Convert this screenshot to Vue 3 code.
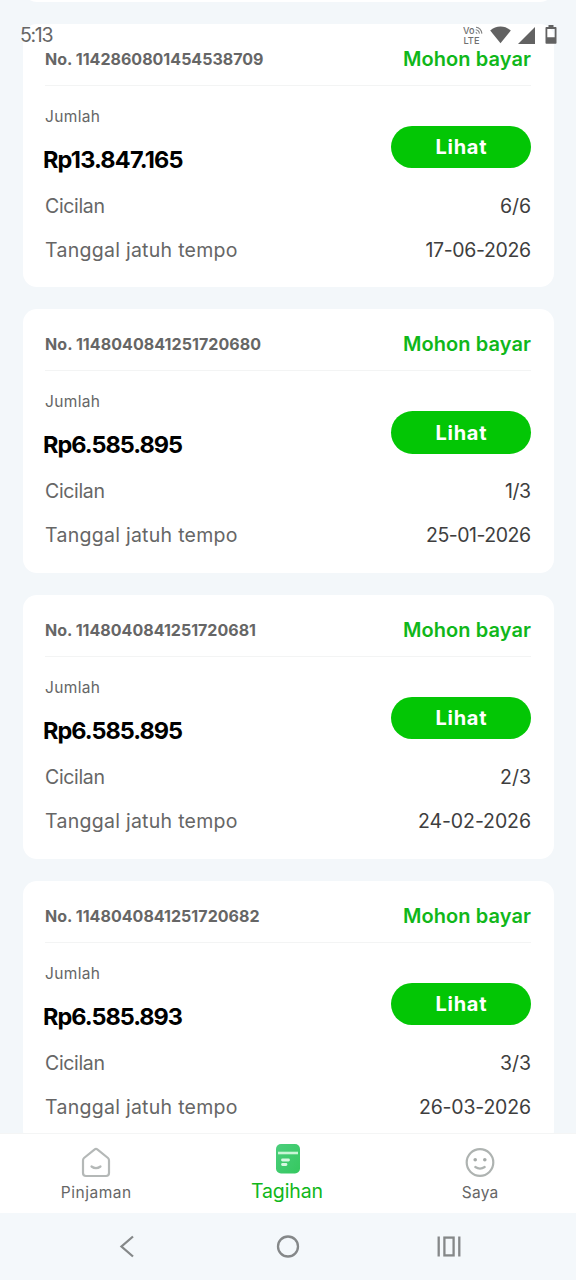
<script setup>
const bills = [
  { no: '1142860801454538709', noWidth: 218.5, amount: 'Rp13.847.165', amountWidth: 140.5, part: '6/6', partWidth: 31, due: '17-06-2026', dueWidth: 105.5 },
  { no: '1148040841251720680', noWidth: 216, amount: 'Rp6.585.895', amountWidth: 140, part: '1/3', partWidth: 26, due: '25-01-2026', dueWidth: 105 },
  { no: '1148040841251720681', noWidth: 211, amount: 'Rp6.585.895', amountWidth: 140, part: '2/3', partWidth: 31, due: '24-02-2026', dueWidth: 113 },
  { no: '1148040841251720682', noWidth: 214.5, amount: 'Rp6.585.893', amountWidth: 140, part: '3/3', partWidth: 31, due: '26-03-2026', dueWidth: 112 },
]

// Tracks a label so that it fills the given width.
const vFit = {
  mounted(el, { value }) {
    const n = el.textContent.length
    const delta = (value - el.getBoundingClientRect().width) / (n - 1)
    el.style.letterSpacing = `${delta}px`
    el.style.marginRight = `${-delta}px`
  },
}
</script>

<template>
  <div class="screen">
    <header class="status">
      <span v-fit="33.5" class="clock">5:13</span>
      <div class="status-icons">
        <svg class="volte" width="21" height="20" viewBox="0 0 21 20">
          <text x="0" y="9" textLength="11.5" lengthAdjust="spacingAndGlyphs">Vo</text>
          <text x="0.5" y="18.5" textLength="16" lengthAdjust="spacingAndGlyphs">LTE</text>
          <g fill="none" stroke="#808080" stroke-width="1.1">
            <path d="M13 2.2C16 2.4 18.7 5 18.9 8.6M12.7 4.8C14.8 5 16.2 6.5 16.4 8.6" />
            <path d="M12.8 7.3L14.2 8.7" />
          </g>
        </svg>
        <svg class="wifi" width="21" height="18" viewBox="0 0 21 18">
          <path d="M.2 4.6C6-1 15-1 20.8 4.6L10.5 17.2Z" fill="#626262" />
        </svg>
        <svg class="signal" width="17" height="17" viewBox="0 0 17 17">
          <path d="M17 0V17H0Z" fill="#626262" />
        </svg>
        <svg class="battery" width="12" height="19" viewBox="0 0 12 19">
          <path d="M3.5 0H8.5V2H10.8Q11.5 2 11.5 3V18Q11.5 18.8 10.7 18.8H1.3Q.5 18.8 .5 18V3Q.5 2 1.3 2H3.5ZM2.3 4V12.3H9.7V4Z" fill="#626262" fill-rule="evenodd" />
        </svg>
      </div>
    </header>

    <main class="list">
      <div class="card tail"></div>
      <article v-for="b in bills" :key="b.no" class="card">
        <div class="head">
          <span v-fit="b.noWidth" class="no">No. {{ b.no }}</span>
          <span v-fit="128" class="state">Mohon bayar</span>
        </div>
        <div class="sum">
          <div class="sum-text">
            <span v-fit="55" class="caption">Jumlah</span>
            <span v-fit="b.amountWidth" class="amount">{{ b.amount }}</span>
          </div>
          <button class="view"><span v-fit="51">Lihat</span></button>
        </div>
        <div class="row">
          <span v-fit="60">Cicilan</span>
          <span v-fit="b.partWidth" class="value">{{ b.part }}</span>
        </div>
        <div class="row">
          <span v-fit="192.5">Tanggal jatuh tempo</span>
          <span v-fit="b.dueWidth" class="value">{{ b.due }}</span>
        </div>
      </article>
    </main>

    <nav class="tabs">
      <div class="tab">
        <svg width="32" height="32" viewBox="0 0 32 32" fill="none" stroke="#b4b8b7" stroke-width="2.2" stroke-linecap="round" stroke-linejoin="round">
          <path d="M14.7 2.4Q16 1.3 17.3 2.4L28 11Q29 11.800 29 13.500V26Q29 29 26 29H6Q3 29 3 26V13.500Q3 11.800 4 11Z" />
          <path d="M11.500 19.500Q16 22.800 20.500 19.500" />
        </svg>
        <span v-fit="70.5">Pinjaman</span>
      </div>
      <div class="tab active">
        <svg width="32" height="32" viewBox="0 0 32 32">
          <defs>
            <linearGradient id="bill" x1="0" y1="0" x2="1" y2="1">
              <stop offset="0" stop-color="#4bce7c" />
              <stop offset="1" stop-color="#35c85f" />
            </linearGradient>
          </defs>
          <rect x="4" y="1" width="24" height="29.5" rx="5" fill="url(#bill)" />
          <path d="M6 10H26" stroke="#c9f5d6" stroke-width="2.6" />
          <path d="M10.500 17H16.500M10.500 21.500H14" stroke="#d8f8e1" stroke-width="2.8" stroke-linecap="round" />
        </svg>
        <span v-fit="72">Tagihan</span>
      </div>
      <div class="tab">
        <svg width="32" height="32" viewBox="0 0 32 32" fill="none" stroke="#aeb3b1" stroke-width="2.2" stroke-linecap="round">
          <circle cx="16" cy="15.5" r="13.3" />
          <path d="M11.300 20Q16 23.200 20.700 20" />
          <g fill="#a5aaa8" stroke="none">
            <circle cx="11.200" cy="12.800" r="1.8" />
            <circle cx="20.800" cy="12.800" r="1.8" />
          </g>
        </svg>
        <span v-fit="36.5">Saya</span>
      </div>
    </nav>

    <footer class="system">
      <svg width="24" height="24" viewBox="0 0 24 24" fill="none" stroke="#858889" stroke-width="2.3">
        <path d="M18 2.500L6.500 12.500L18 22.500" />
      </svg>
      <svg width="24" height="24" viewBox="0 0 24 24" fill="none" stroke="#858889" stroke-width="2.3">
        <circle cx="12" cy="12.500" r="10" />
      </svg>
      <svg width="24" height="24" viewBox="0 0 24 24" fill="none" stroke="#858889" stroke-width="2.3">
        <path d="M1.700 2.500V22.500M22.300 2.500V22.500" />
        <rect x="7.4" y="3.6" width="9.2" height="17.8" />
      </svg>
    </footer>
  </div>
</template>

<style>
html,
body {
  margin: 0;
  background: #f3f7fa;
}
</style>

<style scoped>
.screen {
  position: relative;
  display: flex;
  flex-direction: column;
  width: 576px;
  height: 1280px;
  overflow: hidden;
  background: #f3f7fa;
  font-family: Inter, "Noto Sans", sans-serif;
  color: #666;
}
.status {
  position: absolute;
  z-index: 2;
  top: 23px;
  left: 20px;
  right: 19px;
  display: flex;
  align-items: center;
  justify-content: space-between;
  height: 24px;
}
.clock {
  font-size: 19.5px;
  line-height: 24px;
}
.status-icons {
  display: flex;
  align-items: center;
}
.volte text {
  font: 500 9.5px Inter, sans-serif;
  fill: #707070;
}
.wifi {
  margin-left: 6px;
}
.signal {
  margin-left: 7.5px;
}
.battery {
  margin-left: 10px;
  margin-top: -1px;
}
.list {
  height: 1133px;
  flex: none;
  padding: 0 22.5px;
  overflow: hidden;
  box-sizing: border-box;
}
.card {
  box-sizing: border-box;
  height: 263.7px;
  margin-bottom: 22px;
  padding: 0 22.5px;
  border-radius: 14px;
  background: #fff;
}
.tail {
  height: 40px;
  margin-top: -38.4px;
}
.head {
  display: flex;
  align-items: center;
  justify-content: space-between;
  height: 62px;
  padding-top: 9px;
  box-sizing: border-box;
  border-bottom: 1px solid #f3f4f4;
  white-space: nowrap;
}
.no {
  font-size: 16px;
  font-weight: 700;
}
.state {
  font-size: 20px;
  font-weight: 600;
  color: #10b71a;
}
.sum {
  display: flex;
  align-items: flex-start;
  justify-content: space-between;
  height: 105px;
  padding-top: 19px;
  box-sizing: border-box;
}
.sum-text {
  display: flex;
  flex-direction: column;
  align-items: flex-start;
  gap: 15px;
}
.caption {
  font-size: 15.5px;
  line-height: 24px;
}
.amount {
  margin-left: -2px;
  font-size: 23.5px;
  font-weight: 700;
  line-height: 32px;
  color: #000;
}
.view {
  display: flex;
  align-items: center;
  justify-content: center;
  width: 140px;
  height: 42.5px;
  margin-top: 21px;
  padding: 0;
  border: 0;
  border-radius: 22px;
  background: #03c605;
  color: #fff;
  font: 700 20px Inter, sans-serif;
}
.row {
  display: flex;
  justify-content: space-between;
  height: 44px;
  font-size: 19.5px;
  line-height: 30px;
  white-space: nowrap;
}
.value {
  color: #3e3e3e;
}
.tabs {
  display: grid;
  grid-template-columns: repeat(3, 1fr);
  flex: none;
  height: 80px;
  box-sizing: border-box;
  border-top: 1px solid #f4f5f5;
  background: #fff;
}
.tab {
  display: flex;
  flex-direction: column;
  align-items: center;
  padding-top: 13px;
  font-size: 15.5px;
  line-height: 28px;
}
.tab svg {
  flex: none;
}
.active {
  padding-top: 9px;
  font-size: 19.5px;
  line-height: 32px;
  color: #10b71a;
}
.active span {
  position: relative;
  left: -1px;
}
.system {
  display: flex;
  justify-content: center;
  gap: 137px;
  padding-top: 21px;
  flex: 1;
  background: #f4f8fb;
}
</style>
